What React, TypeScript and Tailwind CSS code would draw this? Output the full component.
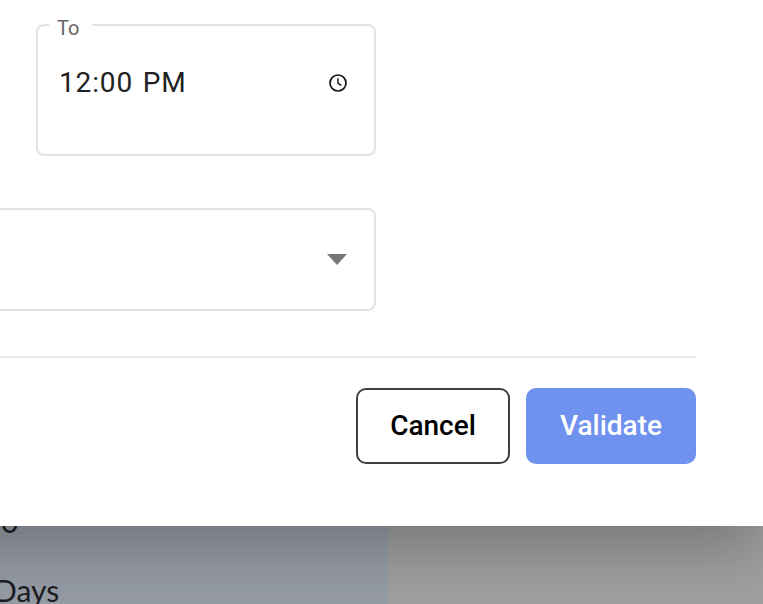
function ClockIcon() {
  return (
    <svg width="20" height="20" viewBox="0 0 20 20" fill="none" stroke="#111" strokeWidth="1.7">
      <circle cx="10" cy="10" r="8" />
      <path d="M10 5.2V10.3L13.4 12.4" strokeWidth="1.4" />
    </svg>
  );
}

export default function App() {
  return (
    <div className="relative h-[604px] w-[763px] overflow-hidden font-['Roboto',sans-serif]">
      <div className="relative z-10 -ml-[100px] h-[526px] bg-white pl-[100px] pt-[15px] shadow-[0_24px_60px_rgba(0,0,0,0.25)]">
        <div className="w-[696px]">
          <div className="w-[376px]">
            <fieldset className="ml-9 h-[141px] rounded-lg border-2 border-[#e2e2e2] pl-[11px]">
              <legend className="h-5 pl-2 pr-[13px] text-xl leading-[26px] text-[#666]">To</legend>
              <div className="flex items-center justify-between pr-[26px] pl-[10px] pt-[32px]">
                <span className="text-[28px] leading-8 tracking-[0.85px] text-[#222] [word-spacing:2px]">12:00 PM</span>
                <ClockIcon />
              </div>
            </fieldset>
            <button className="mt-[52px] -ml-2 flex h-[103px] w-[384px] items-center justify-end rounded-lg border-2 border-[#e2e2e2] pr-[27px]">
              <span className="h-0 w-0 border-x-[10px] border-t-[11px] border-x-transparent border-t-[#777]" />
            </button>
          </div>
          <hr className="mt-[45px] border-t-2 border-[#e8e8e8]" />
          <div className="mt-[30px] flex justify-end gap-4">
            <button className="h-[76px] w-[154px] rounded-[10px] border-2 border-[#3f3f46] text-[28px] font-medium text-black">Cancel</button>
            <button className="h-[76px] w-[170px] rounded-[10px] bg-[#6f92ef] text-[28px] font-medium text-white">Validate</button>
          </div>
        </div>
      </div>
      <div className="flex h-[78px]">
        <div className="w-[388px] bg-[#969ca6] font-['Lato',sans-serif] text-[30px] leading-[40px] text-[#1c1e22]">
          <div className="-mt-[25px] ml-[1px]">0</div>
          <div className="mt-[29px] -ml-[6px]">Days</div>
        </div>
        <div className="flex-1 bg-[#a0a0a0]" />
      </div>
    </div>
  );
}
